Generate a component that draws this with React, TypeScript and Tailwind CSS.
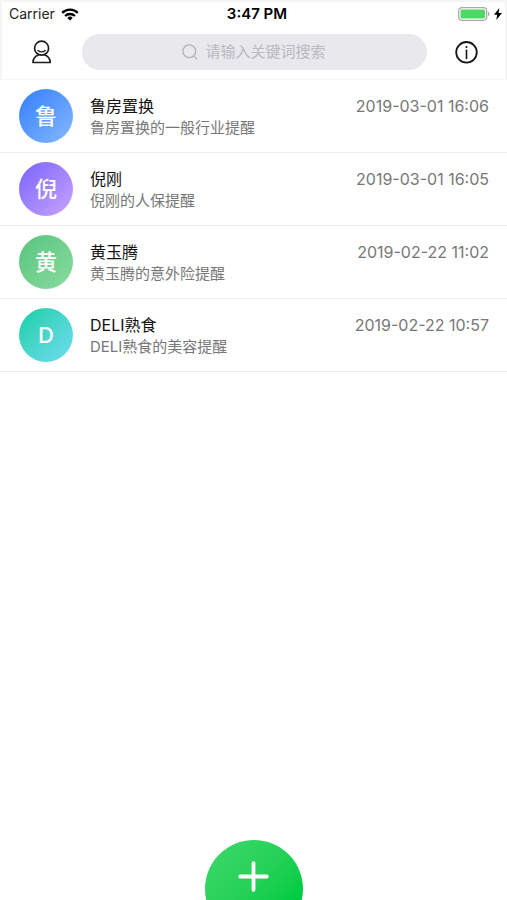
import { useState } from 'react';

type Reminder = {
  id: number;
  name: string;
  initial: string;
  detail: string;
  time: string;
  color: string;
};

const reminders: Reminder[] = [
  {
    id: 1,
    name: '鲁房置换',
    initial: '鲁',
    detail: '鲁房置换的一般行业提醒',
    time: '2019-03-01 16:06',
    color: 'from-[#2f7dfb] to-[#86b8ff]',
  },
  {
    id: 2,
    name: '倪刚',
    initial: '倪',
    detail: '倪刚的人保提醒',
    time: '2019-03-01 16:05',
    color: 'from-[#7b61fa] to-[#c9a3ff]',
  },
  {
    id: 3,
    name: '黄玉腾',
    initial: '黄',
    detail: '黄玉腾的意外险提醒',
    time: '2019-02-22 11:02',
    color: 'from-[#58c480] to-[#88dc9c]',
  },
  {
    id: 4,
    name: 'DELI熟食',
    initial: 'D',
    detail: 'DELI熟食的美容提醒',
    time: '2019-02-22 10:57',
    color: 'from-[#00cfa6] to-[#6cdcf0]',
  },
];

function StatusBar() {
  return (
    <div className="grid h-6 grid-cols-3 items-center pl-[7px] text-sm leading-5 text-black">
      <div className="flex items-center gap-1.5">
        <span className="text-[#222]">Carrier</span>
        <svg width="18" height="13" viewBox="0 0 18 13" fill="none" stroke="#000" strokeWidth="2.3">
          <path d="M1.2 4.9a11.1 11.1 0 0 1 15.6 0" />
          <path d="M4.1 8a7 7 0 0 1 9.8 0" />
          <path d="M9 12.6 6.3 9.9a3.9 3.9 0 0 1 5.4 0z" fill="#000" stroke="none" />
        </svg>
      </div>
      <span className="text-center text-[15px] font-semibold">3:47 PM</span>
      <div className="flex items-center justify-end gap-1 pr-[3px]">
        <svg width="32" height="14" viewBox="0 0 32 14">
          <rect x="0.7" y="0.7" width="28" height="12.6" rx="3.2" fill="#fff" stroke="#a9a9ab" strokeWidth="1.2" />
          <rect x="2.5" y="2.5" width="24.4" height="9" rx="1.2" fill="#4cd964" />
          <path d="M30 4.8c1.9.5 1.9 3.9 0 4.4z" fill="#a9a9ab" />
        </svg>
        <svg width="8" height="12" viewBox="0 0 8 12">
          <path d="M5.3 0 0 6.8h3.2L2.3 12 8 5H4.6z" fill="#000" />
        </svg>
      </div>
    </div>
  );
}

export default function App() {
  const [keyword, setKeyword] = useState('');

  const shown = reminders.filter((r) => (r.name + r.detail).includes(keyword));

  return (
    <div className="flex min-h-screen flex-col bg-white font-['Inter','Noto_Sans_CJK_SC',sans-serif]">
      <header className="border-x-2 border-t-2 border-b border-[#f5f5f6]">
        <StatusBar />
        <div className="flex items-center pt-2 pb-[9px]">
          <button type="button" aria-label="我的" className="flex h-9 w-20 shrink-0 items-center justify-center">
            <svg width="20" height="24" viewBox="0 0 20 24" fill="none" stroke="#1c1c1c" strokeWidth="1.7" strokeLinecap="round" strokeLinejoin="round">
              <circle cx="9.6" cy="8.2" r="7" />
              <path d="M6 10.4c2 1.9 5.2 1.9 7.2 0" strokeWidth="1.4" />
              <path d="M6.6 14.8C3.2 16.2 1 19 1 22.5h17.2c0-3.5-2.2-6.3-5.6-7.7" />
            </svg>
          </button>
          <label className="flex h-9 flex-1 items-center justify-center gap-2 rounded-full bg-[#e9e8ed] pr-0.5">
            <svg width="16" height="16" viewBox="0 0 16 16" fill="none" stroke="#b3b3b9" strokeWidth="1.3" strokeLinecap="round">
              <circle cx="7.3" cy="7.3" r="6.4" />
              <path d="m12.2 12.4 2.6 2.6" />
            </svg>
            <input
              type="text"
              aria-label="搜索"
              placeholder="请输入关键词搜索"
              value={keyword}
              onChange={(e) => setKeyword(e.target.value)}
              className="w-[120px] bg-transparent text-[15px] leading-5 text-[#333] outline-none placeholder:text-[#b9b9bf]"
            />
          </label>
          <button type="button" aria-label="关于" className="flex h-9 w-[78px] shrink-0 items-center justify-center">
            <svg width="24" height="24" viewBox="0 0 24 24" fill="none" stroke="#161616" strokeWidth="1.8">
              <circle cx="12.5" cy="12.3" r="10.3" />
              <path d="M12.5 10.2v8.2" strokeWidth="1.6" strokeLinecap="round" />
              <circle cx="12.5" cy="7" r="1.1" fill="#161616" stroke="none" />
            </svg>
          </button>
        </div>
      </header>

      <ul>
        {shown.map((item) => (
          <li key={item.id} className="flex gap-[17px] border-b border-[#ececec] py-[9px] pr-[18px] pl-[19px]">
            <div className={`flex size-[54px] shrink-0 items-center justify-center rounded-full bg-linear-to-br text-[22px] font-medium text-white ${item.color}`}>
              {item.initial}
            </div>
            <div className="min-w-0 flex-1 pt-[5px]">
              <div className="flex items-center justify-between">
                <p className="truncate text-base leading-6 text-[#111]">{item.name}</p>
                <time className="shrink-0 text-base leading-6 text-[#777]">{item.time}</time>
              </div>
              <p className="truncate text-[15px] leading-5 text-[#777]">{item.detail}</p>
            </div>
          </li>
        ))}
      </ul>

      <footer className="mt-auto flex h-15 items-start justify-center overflow-hidden">
        <button
          type="button"
          aria-label="添加提醒"
          className="flex size-[98px] shrink-0 justify-center rounded-full bg-linear-to-br from-[#3ed86e] to-[#00cc44] to-75% pt-[21px]"
        >
          <svg width="32" height="32" viewBox="0 0 32 32" fill="none" stroke="#fff" strokeWidth="3.8" strokeLinecap="round">
            <path d="M15.5 2.2v26.6M2.2 15.5h26.6" />
          </svg>
        </button>
      </footer>
    </div>
  );
}
